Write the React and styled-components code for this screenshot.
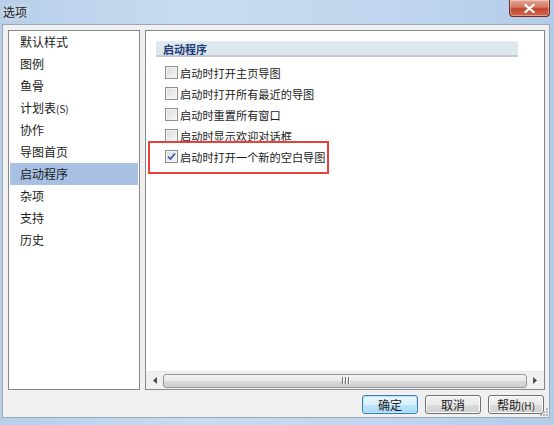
import React from 'react';
import styled, { createGlobalStyle } from 'styled-components';

const GlobalStyle = createGlobalStyle`
  html, body { margin: 0; padding: 0; }
  body {
    width: 554px;
    height: 425px;
    overflow: hidden;
    font-family: "Noto Sans CJK SC", "Liberation Sans", sans-serif;
    font-size: 12px;
    color: #1b1b1b;
    background: #b9d1ea;
  }
`;

const Window = styled.div`
  width: 554px;
  height: 425px;
  box-sizing: border-box;
  display: flex;
  flex-direction: column;
  background: linear-gradient(90deg, #b7cfe9 0%, #c8dcf1 35%, #c0d6ee 70%, #b3cce8 100%);
  padding: 0 4px 7px 2px;
`;

const TitleBar = styled.div`
  height: 24px;
  display: flex;
  justify-content: space-between;
  align-items: flex-start;
`;

const Title = styled.div`
  padding: 3px 0 0 1px;
  font-size: 12px;
  color: #1a1a1a;
  text-shadow: 0 0 6px rgba(255, 255, 255, 0.9);
`;

const CloseButton = styled.div`
  width: 41px;
  height: 17px;
  box-sizing: border-box;
  border: 1px solid #6f2a26;
  border-top: none;
  border-radius: 0 0 4px 4px;
  background: linear-gradient(180deg, #e5a496 0%, #d37662 45%, #c2432c 55%, #d0694f 100%);
  box-shadow: inset 0 0 0 1px rgba(255, 255, 255, 0.35);
  display: flex;
  align-items: center;
  justify-content: center;
`;

const Client = styled.div`
  flex: 1;
  display: flex;
  flex-direction: column;
  background: #f0f0f0;
  border: 1px solid #9aa7b6;
  padding: 5px 4px 0 5px;
  position: relative;
`;

const Panels = styled.div`
  display: flex;
  gap: 5px;
  height: 360px;
`;

const NavList = styled.div`
  width: 132px;
  box-sizing: border-box;
  border: 1px solid #828790;
  background: #fff;
  padding: 0 1px;
`;

const NavItem = styled.div`
  height: 22px;
  line-height: 22px;
  padding-left: 10px;
  background: ${p => (p.$active ? '#a8c0e4' : 'transparent')};
  color: #1b1b1b;
`;

const Small = styled.span`
  font-size: 10px;
`;

const Content = styled.div`
  flex: 1;
  box-sizing: border-box;
  border: 1px solid #828790;
  background: #fff;
  display: flex;
  flex-direction: column;
`;

const ContentBody = styled.div`
  flex: 1;
  padding: 10px 0 0 10px;
`;

const SectionHeader = styled.div`
  width: 362px;
  height: 16px;
  box-sizing: border-box;
  background: #dde7ee;
  border-top: 1px solid #e6eef3;
  border-bottom: 2px solid #c3ccd4;
  padding-left: 7px;
  font-size: 11px;
  font-weight: bold;
  line-height: 14px;
  color: #1e3c78;
`;

const Options = styled.div`
  margin-top: 5px;
  padding-left: 9px;
`;

const OptionRow = styled.label`
  height: 21px;
  display: flex;
  align-items: center;
  position: relative;
  font-size: 11.2px;

  ${p => p.$marked && `
    &::after {
      content: '';
      position: absolute;
      left: -17px;
      top: -5px;
      width: 181px;
      height: 33px;
      box-sizing: border-box;
      border: 2px solid #e8413c;
      pointer-events: none;
    }
  `}
`;

const Box = styled.span`
  width: 13px;
  height: 13px;
  box-sizing: border-box;
  border: 1px solid #8e8f8f;
  background: linear-gradient(135deg, #dcdcdc 0%, #f6f6f6 100%);
  box-shadow: inset 0 0 0 1px #f4f4f4;
  margin-right: 2px;
  display: flex;
  align-items: center;
  justify-content: center;
`;

const Scrollbar = styled.div`
  height: 17px;
  display: flex;
  align-items: center;
  background: #f0f0f0;
  border-top: 1px solid #e8e8e8;
  padding: 0 1px;
`;

const ArrowButton = styled.div`
  width: 16px;
  height: 16px;
  display: flex;
  align-items: center;
  justify-content: center;
`;

const Track = styled.div`
  flex: 1;
  height: 16px;
  display: flex;
  align-items: center;
`;

const Thumb = styled.div`
  flex: 1;
  height: 14px;
  box-sizing: border-box;
  border: 1px solid #979797;
  border-radius: 3px;
  background: linear-gradient(180deg, #f4f4f4 0%, #e8e8e8 50%, #d9d9d9 51%, #cfcfcf 100%);
  display: flex;
  align-items: center;
  justify-content: center;
  gap: 2px;
`;

const Grip = styled.span`
  width: 1px;
  height: 7px;
  background: #6f6f6f;
  box-shadow: 1px 0 0 #fafafa;
`;

const ButtonRow = styled.div`
  display: flex;
  justify-content: flex-end;
  gap: 7px;
  padding: 5px 1px 0 0;
`;

const Button = styled.button`
  width: 56px;
  height: 19px;
  padding: 0;
  box-sizing: border-box;
  font-family: inherit;
  font-size: 12px;
  line-height: 15px;
  color: #1b1b1b;
  border: 1px solid ${p => (p.$default ? '#3c7fb1' : '#707070')};
  border-radius: 3px;
  background: ${p =>
    p.$default
      ? 'linear-gradient(180deg, #eaf6fd 0%, #d9f0fc 50%, #bee6fd 51%, #a7d9f5 100%)'
      : 'linear-gradient(180deg, #f2f2f2 0%, #ebebeb 50%, #dddddd 51%, #cfcfcf 100%)'};
  box-shadow: inset 0 0 0 1px ${p => (p.$default ? '#b8e3f9' : '#fcfcfc')};
`;

const SizeGrip = styled.svg`
  position: absolute;
  right: 1px;
  bottom: 1px;
`;

const navItems = [
  { key: 'default', label: '默认样式' },
  { key: 'legend', label: '图例' },
  { key: 'fish', label: '鱼骨' },
  { key: 'plan', label: '计划表', hotkey: '(S)' },
  { key: 'collab', label: '协作' },
  { key: 'home', label: '导图首页' },
  { key: 'startup', label: '启动程序' },
  { key: 'misc', label: '杂项' },
  { key: 'support', label: '支持' },
  { key: 'history', label: '历史' },
];

const options = [
  { label: '启动时打开主页导图' },
  { label: '启动时打开所有最近的导图' },
  { label: '启动时重置所有窗口' },
  { label: '启动时显示欢迎对话框' },
  { label: '启动时打开一个新的空白导图', checked: true, marked: true },
];

const Check = ({ checked }) => (
  <Box>
    {checked && (
      <svg width="9" height="9" viewBox="0 0 9 9">
        <path d="M1 4.5 L3.4 7 L8 1.5" fill="none" stroke="#2b4fa8" strokeWidth="1.6" />
      </svg>
    )}
  </Box>
);

const App = () => (
  <>
    <GlobalStyle />
    <Window>
      <TitleBar>
        <Title>选项</Title>
        <CloseButton>
          <svg width="11" height="9" viewBox="0 0 11 9">
            <path d="M1.5 1 L9.5 8 M9.5 1 L1.5 8" stroke="#fff" strokeWidth="2.2" strokeLinecap="square" />
          </svg>
        </CloseButton>
      </TitleBar>
      <Client>
        <Panels>
          <NavList>
            {navItems.map(item => (
              <NavItem key={item.key} $active={item.key === 'startup'}>
                {item.label}
                {item.hotkey && <Small>{item.hotkey}</Small>}
              </NavItem>
            ))}
          </NavList>
          <Content>
            <ContentBody>
              <SectionHeader>启动程序</SectionHeader>
              <Options>
                {options.map(o => (
                  <OptionRow key={o.label} $marked={o.marked}>
                    <Check checked={o.checked} />
                    {o.label}
                  </OptionRow>
                ))}
              </Options>
            </ContentBody>
            <Scrollbar>
              <ArrowButton>
                <svg width="4" height="7" viewBox="0 0 4 7"><path d="M4 0 L0 3.5 L4 7 Z" fill="#4d4d4d" /></svg>
              </ArrowButton>
              <Track>
                <Thumb>
                  <Grip />
                  <Grip />
                  <Grip />
                </Thumb>
              </Track>
              <ArrowButton>
                <svg width="4" height="7" viewBox="0 0 4 7"><path d="M0 0 L4 3.5 L0 7 Z" fill="#4d4d4d" /></svg>
              </ArrowButton>
            </Scrollbar>
          </Content>
        </Panels>
        <ButtonRow>
          <Button $default>确定</Button>
          <Button>取消</Button>
          <Button>帮助<Small>(H)</Small></Button>
        </ButtonRow>
        <SizeGrip width="8" height="8" viewBox="0 0 8 8">
          <g fill="#b5b5b5">
            <rect x="6" y="0" width="2" height="2" />
            <rect x="3" y="3" width="2" height="2" />
            <rect x="6" y="3" width="2" height="2" />
            <rect x="0" y="6" width="2" height="2" />
            <rect x="3" y="6" width="2" height="2" />
            <rect x="6" y="6" width="2" height="2" />
          </g>
        </SizeGrip>
      </Client>
    </Window>
  </>
);

export default App;
